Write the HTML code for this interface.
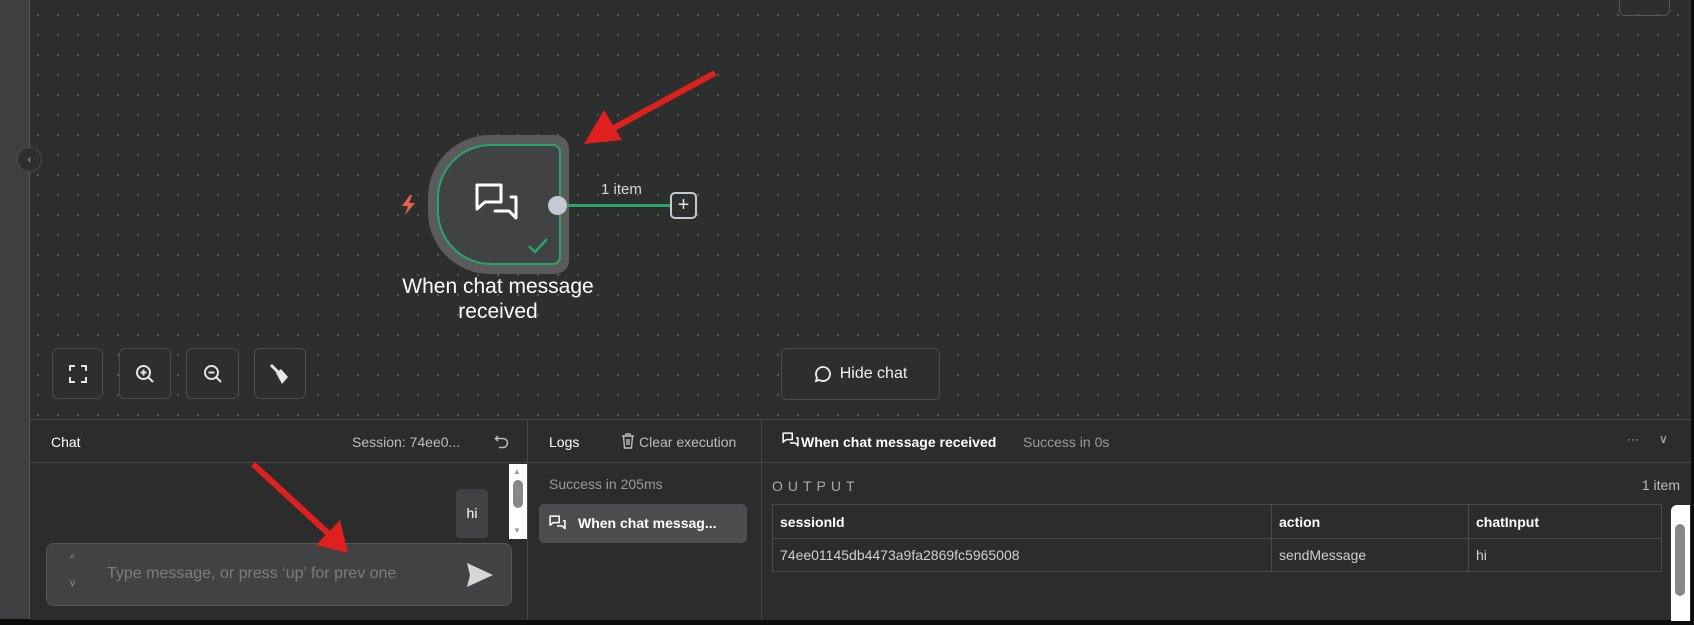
<!DOCTYPE html>
<html><head><meta charset="utf-8"><style>
*{box-sizing:border-box;margin:0;padding:0}
body{width:1694px;height:625px;overflow:hidden;background:#2d2e2e;font-family:"Liberation Sans",sans-serif;color:#e6e6e6;position:relative;font-size:14px}
.abs{position:absolute}
.canvas{left:30px;top:0;width:1661px;height:419px;background-color:#2d2e2e;background-image:radial-gradient(circle,#5a5b5b 1px,transparent 1.3px);background-size:20px 20px;background-position:-2px 5px}
.side{left:0;top:0;width:30px;height:620px;background:#3e3f41;border-right:1px solid #555}
.btn{position:absolute;border:1px solid #4c4d4e;border-radius:6px;background:#2d2e2e;display:flex;align-items:center;justify-content:center}
.panel{left:30px;top:419px;width:1661px;height:201px;background:#2b2c2c;border-top:1px solid #474848}
.vline{position:absolute;top:0;bottom:0;width:1px;background:#474848}
.hline{position:absolute;height:1px;background:#474848}
.t{position:absolute;white-space:nowrap}
</style></head><body>
<div class="abs canvas"></div>
<div class="abs side"></div>
<div class="abs" style="left:0;top:619px;width:1694px;height:6px;background:#0c0c0c"></div>
<div class="abs" style="left:1691px;top:0;width:3px;height:625px;background:#0c0c0c"></div>
<div class="abs" style="left:1619px;top:-10px;width:51px;height:26px;border:1px solid #555;border-radius:6px"></div>
<div class="abs" style="left:17px;top:147px;width:25px;height:25px;border-radius:50%;background:#2d2e2e;border:1px solid #4a4b4b;display:flex;align-items:center;justify-content:center;color:#bbb;font-size:11px">‹</div>
<div class="abs" style="left:428px;top:135px;width:141px;height:139px;background:#5b5b5b;border-radius:62px 14px 14px 62px"></div>
<div class="abs" style="left:437px;top:144px;width:124px;height:121px;background:#414244;border:2px solid #2aa56a;border-radius:54px 8px 8px 54px"></div>
<svg class="abs" style="left:474px;top:182px" width="50" height="50" viewBox="0 0 50 50" fill="none" stroke="#fff" stroke-width="3" stroke-linejoin="round" stroke-linecap="round">
<path d="M3 3h24v17H11l-8 7z"/><path d="M21 29h14l7 7V15h-5"/></svg>
<svg class="abs" style="left:527px;top:237px" width="22" height="18" viewBox="0 0 22 18" fill="none" stroke="#2aa56a" stroke-width="2.4"><path d="M2 9l6 6 12-13"/></svg>
<svg class="abs" style="left:399px;top:194px" width="20" height="22" viewBox="0 0 20 22"><path d="M11 1L3 12h6l-3 9 10-12h-6l3-8z" fill="#e8634d"/></svg>
<div class="abs" style="left:548px;top:196px;width:19px;height:19px;border-radius:50%;background:#c5c9d2"></div>
<div class="abs" style="left:567px;top:204px;width:104px;height:3px;background:#2aa56a"></div>
<div class="abs" style="left:670px;top:192px;width:27px;height:27px;border:2px solid #c5c9d2;border-radius:5px;background:#2d2e2e;color:#e6e6e6;font-size:20px;line-height:22px;text-align:center">+</div>
<div class="t" style="left:601px;top:181px;font-size:15px;color:#d6d6d6">1 item</div>
<div class="t" style="left:370px;top:274px;width:256px;text-align:center;font-size:21px;line-height:25px;color:#fff;white-space:normal">When chat message<br>received</div>
<div class="btn" style="left:52px;top:348px;width:51px;height:51px"><svg width="20" height="20" viewBox="0 0 20 20" fill="none" stroke="#e6e6e6" stroke-width="2"><path d="M2 7V2h5M13 2h5v5M18 13v5h-5M7 18H2v-5"/></svg></div>
<div class="btn" style="left:119px;top:348px;width:52px;height:51px"><svg width="20" height="20" viewBox="0 0 20 20" fill="none" stroke="#e6e6e6" stroke-width="2"><circle cx="8.5" cy="8.5" r="6.5"/><path d="M13.5 13.5L18 18M8.5 5.5v6M5.5 8.5h6"/></svg></div>
<div class="btn" style="left:186px;top:348px;width:53px;height:51px"><svg width="20" height="20" viewBox="0 0 20 20" fill="none" stroke="#e6e6e6" stroke-width="2"><circle cx="8.5" cy="8.5" r="6.5"/><path d="M13.5 13.5L18 18M5.5 8.5h6"/></svg></div>
<div class="btn" style="left:254px;top:348px;width:52px;height:51px"><svg width="22" height="22" viewBox="0 0 22 22"><path d="M2 2l7 7" stroke="#e6e6e6" stroke-width="3"/><path d="M7 10l5-4 7 8-6 7z" fill="#e6e6e6"/></svg></div>
<div class="btn" style="left:781px;top:348px;width:159px;height:52px;font-size:16px;color:#f0f0f0;gap:8px"><svg width="18" height="18" viewBox="0 0 18 18" fill="none" stroke="#f0f0f0" stroke-width="1.8"><path d="M9 2a7 7 0 1 1-3.6 13L2 16l1-3.4A7 7 0 0 1 9 2z"/></svg>Hide chat</div>
<div class="abs panel">
<div class="vline" style="left:497px"></div>
<div class="vline" style="left:731px"></div>
<div class="hline" style="left:0;width:1661px;top:42px"></div>
<div class="t" style="left:21px;top:14px;color:#fff">Chat</div>
<div class="t" style="left:322px;top:14px;color:#bdbdbd">Session: 74ee0...</div>
<svg class="abs" style="left:464px;top:13px" width="16" height="16" viewBox="0 0 16 16" fill="none" stroke="#bdbdbd" stroke-width="1.5"><path d="M4 3L1.5 5.5 4 8"/><path d="M2 5.5h7a4.5 4.5 0 0 1 0 9H5"/></svg>
<div class="abs" style="left:479px;top:44px;width:18px;height:75px;background:#fff"></div>
<div class="abs" style="left:483px;top:60px;width:10px;height:28px;background:#888;border-radius:5px"></div>
<div class="t" style="left:483px;top:47px;font-size:8px;color:#999">▲</div>
<div class="t" style="left:483px;top:106px;font-size:8px;color:#999">▼</div>
<div class="abs" style="left:426px;top:69px;width:32px;height:49px;background:#414244;border-radius:4px;color:#fff;text-align:center;line-height:49px">hi</div>
<div class="abs" style="left:16px;top:123px;width:466px;height:63px;background:#414244;border:1px solid #565758;border-radius:8px"></div>
<div class="t" style="left:40px;top:134px;font-size:10px;color:#999">^</div>
<div class="t" style="left:40px;top:158px;font-size:10px;color:#999">v</div>
<div class="t" style="left:77px;top:145px;font-size:16px;color:#7d7e80">Type message, or press ‘up’ for prev one</div>
<svg class="abs" style="left:436px;top:142px" width="28" height="26" viewBox="0 0 28 26"><path d="M1 1l26 12L1 25l3-12z" fill="#d6d6d6"/></svg>
<div class="t" style="left:519px;top:14px;color:#fff">Logs</div>
<svg class="abs" style="left:591px;top:12px" width="14" height="17" viewBox="0 0 14 17" fill="none" stroke="#bdbdbd" stroke-width="1.4"><path d="M1 4h12M5 4V2h4v2M2.5 4l1 12h7l1-12M6 7v6M8 7v6"/></svg>
<div class="t" style="left:609px;top:14px;color:#bdbdbd">Clear execution</div>
<div class="t" style="left:519px;top:56px;color:#9a9a9a">Success in 205ms</div>
<div class="abs" style="left:509px;top:84px;width:208px;height:39px;background:#4c4d4f;border-radius:5px"></div>
<svg class="abs" style="left:519px;top:95px" width="19" height="19" viewBox="0 0 50 50" fill="none" stroke="#fff" stroke-width="4" stroke-linejoin="round"><path d="M3 3h24v17H11l-8 7z"/><path d="M21 29h14l7 7V15h-5"/></svg>
<div class="t" style="left:548px;top:95px;color:#fff;font-weight:bold">When chat messag...</div>
<svg class="abs" style="left:752px;top:12px" width="19" height="19" viewBox="0 0 50 50" fill="none" stroke="#fff" stroke-width="4" stroke-linejoin="round"><path d="M3 3h24v17H11l-8 7z"/><path d="M21 29h14l7 7V15h-5"/></svg>
<div class="t" style="left:771px;top:14px;color:#fff;font-weight:bold">When chat message received</div>
<div class="t" style="left:993px;top:14px;color:#9a9a9a">Success in 0s</div>
<div class="t" style="left:1597px;top:12px;color:#bdbdbd;font-size:12px">···</div>
<div class="t" style="left:1629px;top:12px;color:#bdbdbd;font-size:12px">∨</div>
<div class="t" style="left:742px;top:58px;color:#aaa;font-size:14px;letter-spacing:5px">OUTPUT</div>
<div class="t" style="left:1610px;top:57px;color:#bdbdbd;width:40px;text-align:right">1 item</div>
<div class="abs" style="left:742px;top:84px;width:890px;height:68px;border:1px solid #4a4b4b"></div>
<div class="hline" style="left:742px;width:890px;top:118px;background:#4a4b4b"></div>
<div class="abs" style="left:1241px;top:84px;width:1px;height:68px;background:#4a4b4b"></div>
<div class="abs" style="left:1438px;top:84px;width:1px;height:68px;background:#4a4b4b"></div>
<div class="t" style="left:750px;top:94px;color:#fff;font-weight:bold">sessionId</div>
<div class="t" style="left:1249px;top:94px;color:#fff;font-weight:bold">action</div>
<div class="t" style="left:1446px;top:94px;color:#fff;font-weight:bold">chatInput</div>
<div class="t" style="left:750px;top:127px;color:#d0d0d0">74ee01145db4473a9fa2869fc5965008</div>
<div class="t" style="left:1249px;top:127px;color:#d0d0d0">sendMessage</div>
<div class="t" style="left:1446px;top:127px;color:#d0d0d0">hi</div>
<div class="abs" style="left:1641px;top:85px;width:19px;height:116px;background:#fff;border-radius:6px 0 0 0"></div>
<div class="abs" style="left:1645px;top:104px;width:10px;height:72px;background:#888;border-radius:5px"></div>
</div>
<svg class="abs" style="left:0;top:0" width="1694" height="625">
<line x1="715" y1="73" x2="612" y2="129" stroke="#e01f1f" stroke-width="6"/>
<polygon points="584,144 604,110 622,140" fill="#e01f1f"/>
<line x1="253" y1="464" x2="330" y2="535" stroke="#e01f1f" stroke-width="6"/>
<polygon points="348,553 316,545 340,520" fill="#e01f1f"/>
</svg>
</body></html>
